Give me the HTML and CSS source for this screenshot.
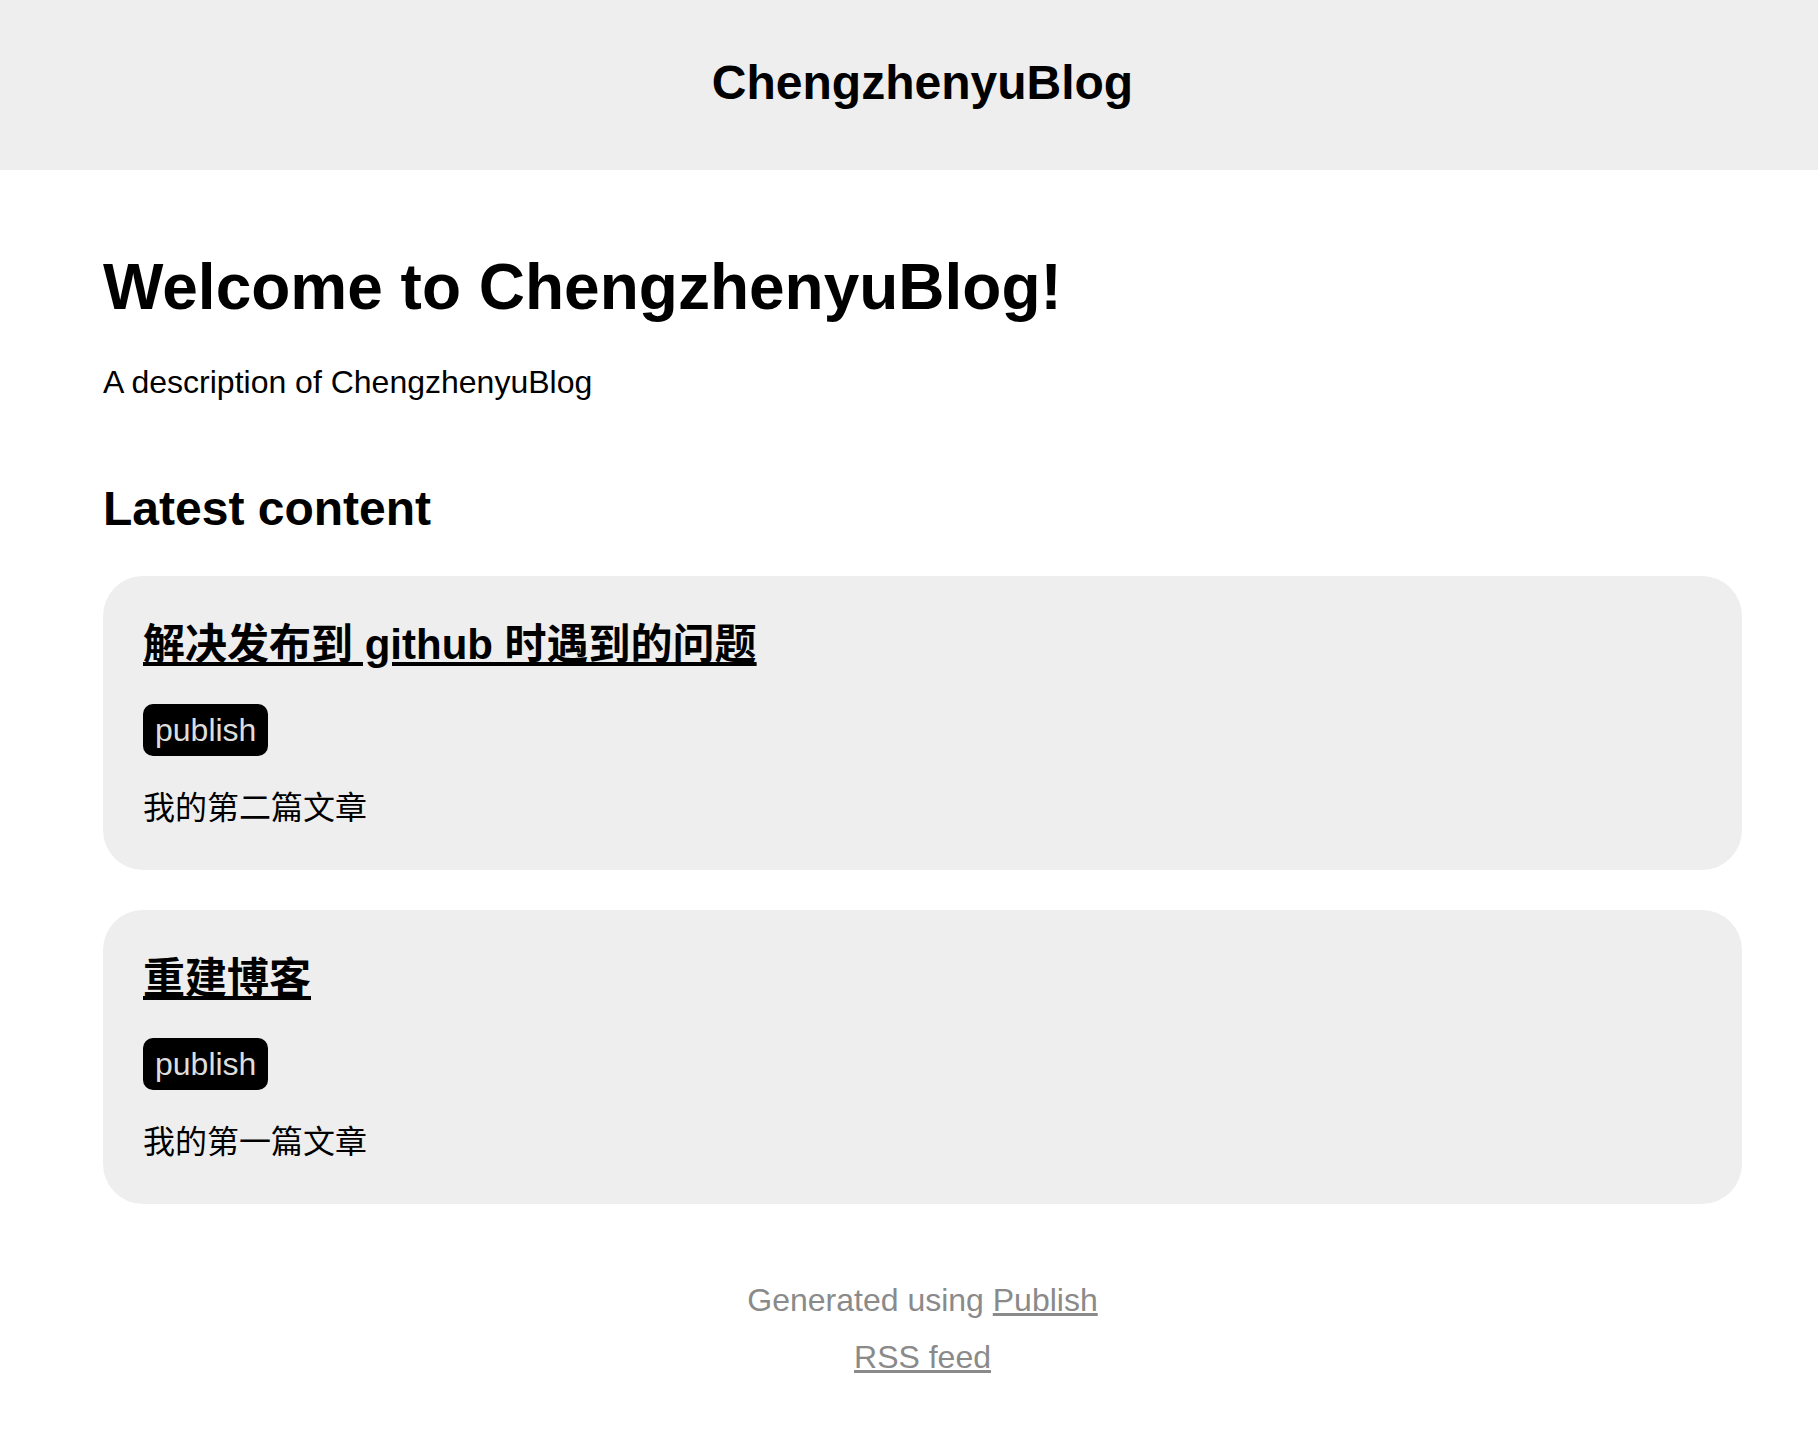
FILE: index.html
```html
<!DOCTYPE html>
<html lang="zh">
<head>
<meta charset="utf-8">
<title>ChengzhenyuBlog</title>
<link rel="stylesheet" href="styles.css">
</head>
<body>
<header>
  <div class="wrapper header-wrapper">
    <a class="site-name" href="#">ChengzhenyuBlog</a>
  </div>
</header>
<div class="wrapper main-wrapper">
  <h1 class="page-title">Welcome to ChengzhenyuBlog!</h1>
  <p class="description">A description of ChengzhenyuBlog</p>
  <h2 class="section-title">Latest content</h2>
  <ul class="item-list">
    <li class="item">
      <article>
        <h1 class="item-title"><a href="#">解决发布到 github 时遇到的问题</a></h1>
        <ul class="tag-list"><li class="tag"><a href="#">publish</a></li></ul>
        <p class="item-desc">我的第二篇文章</p>
      </article>
    </li>
    <li class="item">
      <article>
        <h1 class="item-title"><a href="#">重建博客</a></h1>
        <ul class="tag-list"><li class="tag"><a href="#">publish</a></li></ul>
        <p class="item-desc">我的第一篇文章</p>
      </article>
    </li>
  </ul>
</div>
<footer>
  <div class="wrapper footer-wrapper">
    <p class="footer-line">Generated using <a href="#">Publish</a></p>
    <p class="footer-line"><a href="#">RSS feed</a></p>
  </div>
</footer>
</body>
</html>
```

FILE: styles.css
```css
* {
  margin: 0;
  padding: 0;
  box-sizing: border-box;
}

html, body {
  overflow: hidden;
}

body {
  background: #fff;
  color: #000;
  font-family: "Liberation Sans", Arial, "Noto Sans CJK SC", sans-serif;
  font-size: 32px;
  line-height: 1.15;
  text-align: center;
}

a {
  color: inherit;
}

.wrapper {
  padding-left: 103px;
  padding-right: 76px;
  text-align: left;
}

header {
  background-color: #eee;
}

.header-wrapper {
  height: 170px;
  padding-top: 55px;
  text-align: center;
}

.site-name {
  font-size: 48px;
  line-height: 55px;
  font-weight: bold;
  color: #000;
  text-decoration: none;
}

.main-wrapper {
  padding-top: 80px;
  padding-bottom: 78px;
}

.page-title {
  font-size: 64px;
  line-height: 74px;
  font-weight: bold;
  margin-bottom: 40px;
}

.description {
  font-size: 32px;
  line-height: 37px;
  margin-bottom: 80px;
}

.section-title {
  font-size: 48px;
  line-height: 55px;
  font-weight: bold;
  margin-bottom: 40px;
}

.item-list {
  list-style: none;
}

.item {
  display: block;
  background-color: #eee;
  border-radius: 40px;
  padding: 40px;
  margin-bottom: 40px;
}

.item:last-child {
  margin-bottom: 0;
}

.item-title {
  font-size: 42px;
  line-height: 58px;
  font-weight: bold;
  margin-bottom: 30px;
}

.tag-list {
  list-style: none;
  display: flex;
  margin-bottom: 30px;
}

.tag {
  background-color: #000;
  color: #ddd;
  padding: 8px 12px;
  border-radius: 10px;
  font-size: 32px;
  line-height: 36px;
  margin-right: 10px;
}

.tag a {
  text-decoration: none;
}

.item-desc {
  font-size: 32px;
  line-height: 44px;
}

footer {
  color: #8a8a8a;
}

.footer-wrapper {
  text-align: center;
  padding-bottom: 40px;
}

.footer-line {
  font-size: 32px;
  line-height: 37px;
  margin-bottom: 20px;
}
```
